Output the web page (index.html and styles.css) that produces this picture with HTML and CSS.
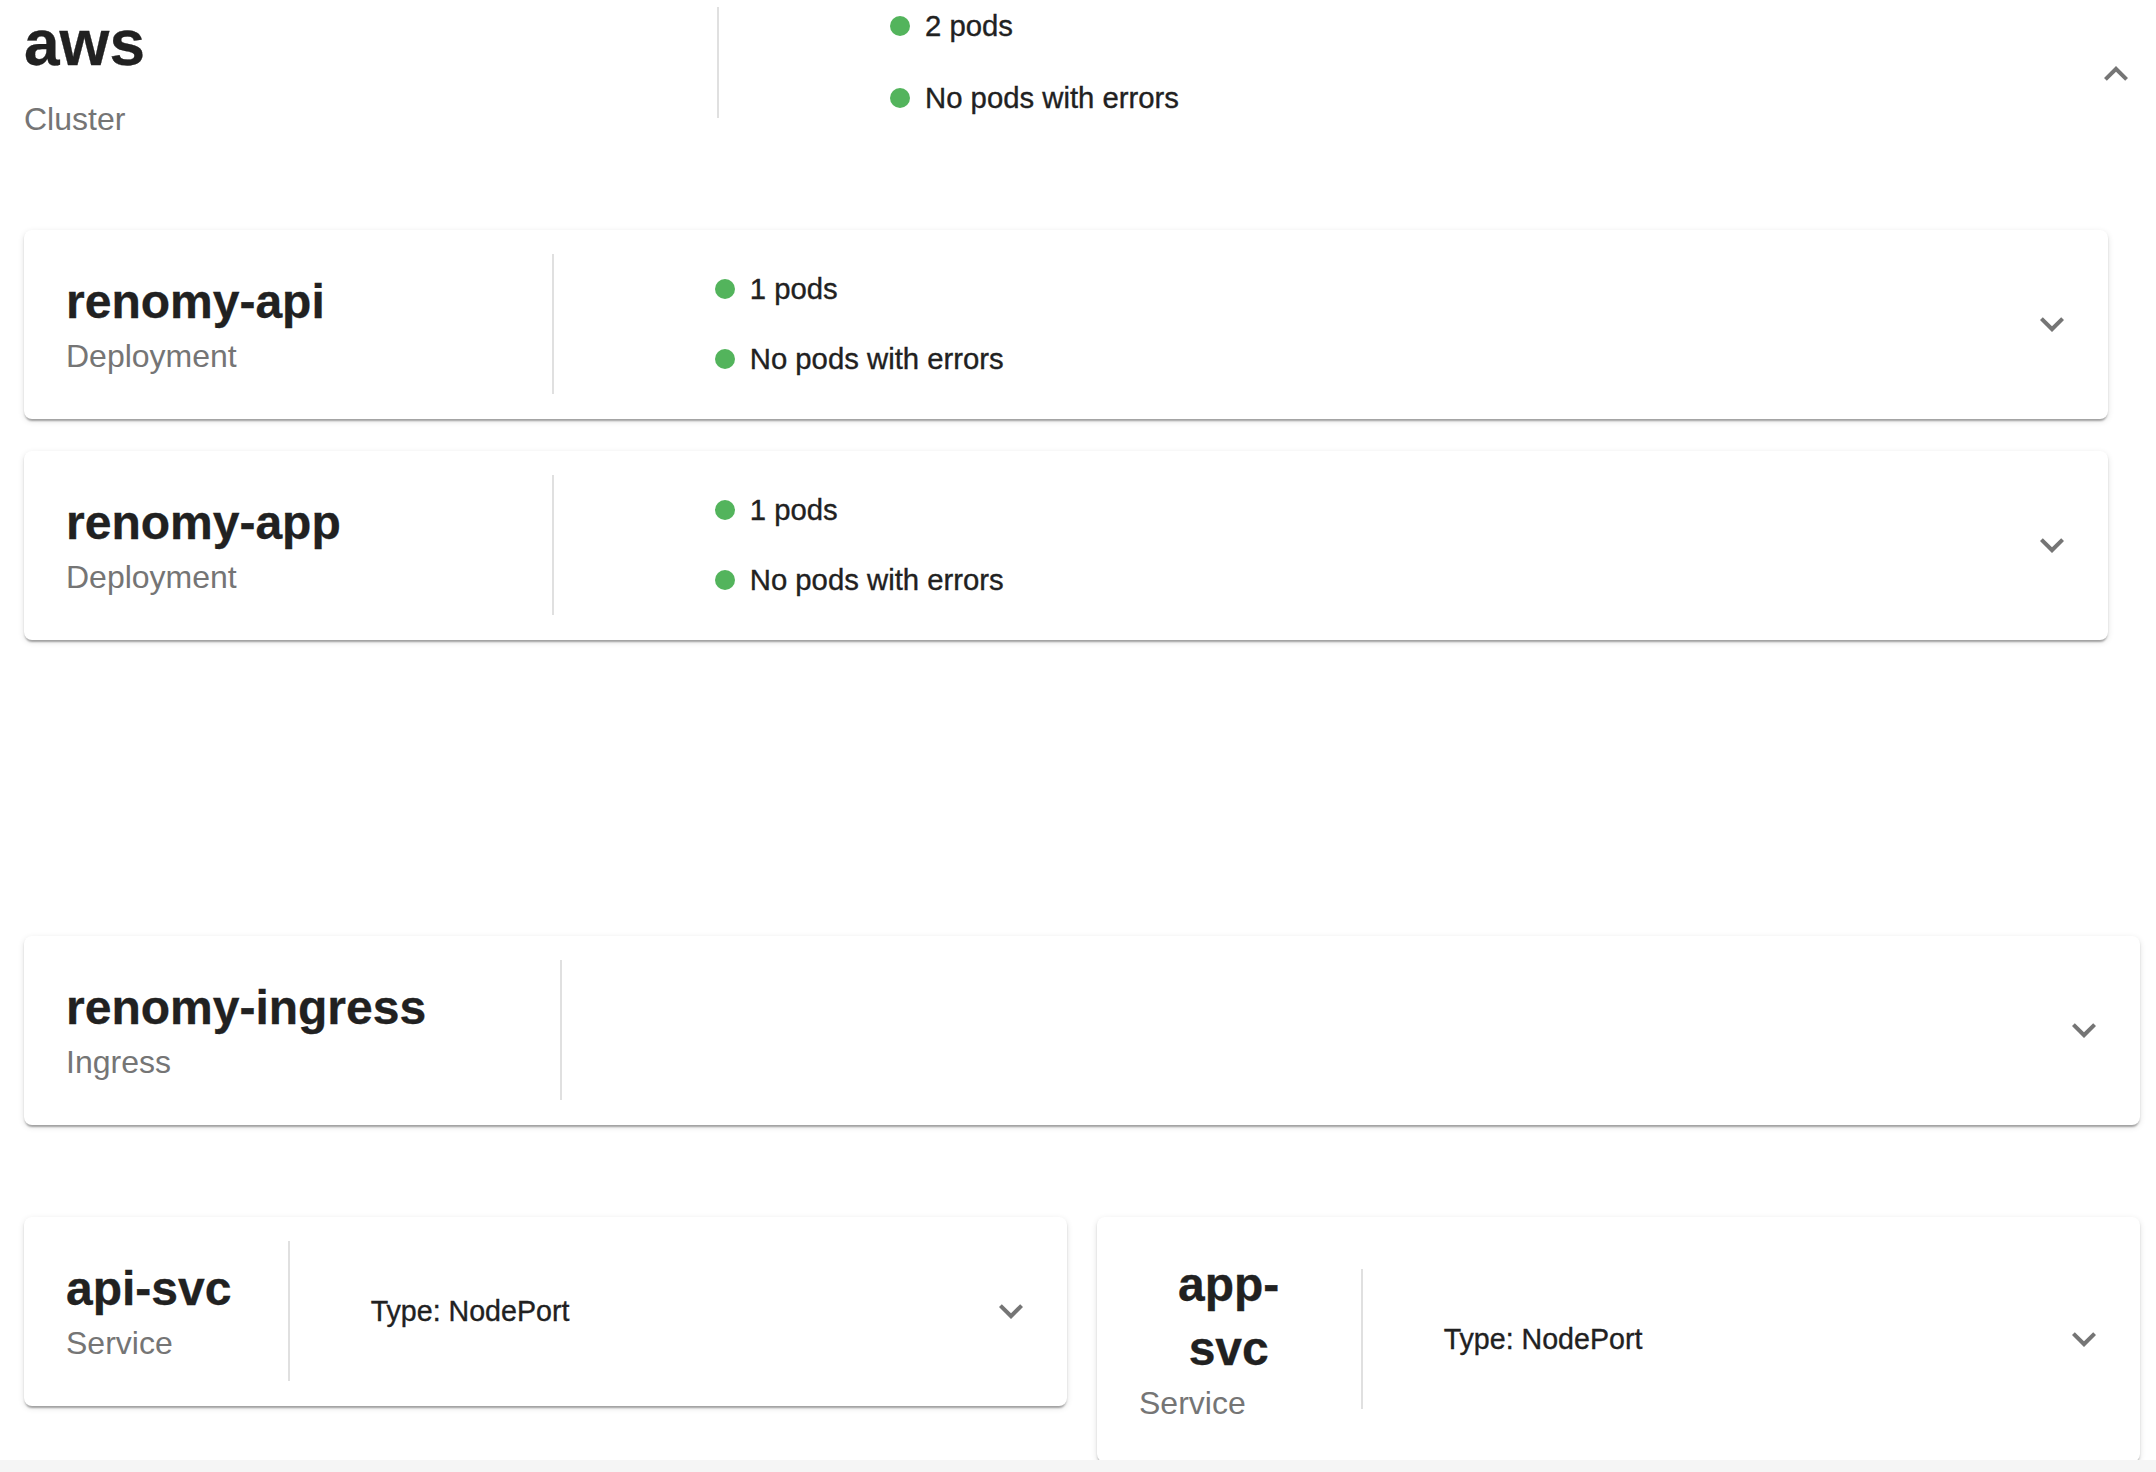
FILE: index.html
```html
<!DOCTYPE html>
<html lang="en">
<head>
<meta charset="utf-8">
<title>Cluster overview</title>
<link rel="stylesheet" href="styles.css">
</head>
<body>
<div class="page">
  <div class="content">
    <section class="cluster">
      <div class="cluster-id">
        <div class="ident">
          <div class="title title-lg">aws</div>
          <div class="kind kind-lg">Cluster</div>
        </div>
      </div>
      <div class="vdiv vdiv-cluster"></div>
      <ul class="status status-cluster">
        <li class="status-row row-lg"><span class="dot"></span>2 pods</li>
        <li class="status-row row-lg"><span class="dot"></span>No pods with errors</li>
      </ul>
      <span class="chev chev-up">
        <svg viewBox="0 0 24 24" width="48" height="48"><path d="M12 8l-6 6 1.41 1.41L12 10.83l4.59 4.58L18 14z"/></svg>
      </span>
    </section>

    <div class="deployments">
      <article class="card">
        <div class="left">
          <div class="ident">
            <div class="title">renomy-api</div>
            <div class="kind">Deployment</div>
          </div>
        </div>
        <div class="vdiv"></div>
        <ul class="right status">
          <li class="status-row"><span class="dot"></span>1 pods</li>
          <li class="status-row"><span class="dot"></span>No pods with errors</li>
        </ul>
        <span class="chev">
          <svg viewBox="0 0 24 24" width="48" height="48"><path d="M16.59 8.59 12 13.17 7.41 8.59 6 10l6 6 6-6z"/></svg>
        </span>
      </article>
      <article class="card">
        <div class="left">
          <div class="ident">
            <div class="title">renomy-app</div>
            <div class="kind">Deployment</div>
          </div>
        </div>
        <div class="vdiv"></div>
        <ul class="right status">
          <li class="status-row"><span class="dot"></span>1 pods</li>
          <li class="status-row"><span class="dot"></span>No pods with errors</li>
        </ul>
        <span class="chev">
          <svg viewBox="0 0 24 24" width="48" height="48"><path d="M16.59 8.59 12 13.17 7.41 8.59 6 10l6 6 6-6z"/></svg>
        </span>
      </article>
    </div>

    <div class="ingresses">
      <article class="card">
        <div class="left">
          <div class="ident">
            <div class="title">renomy-ingress</div>
            <div class="kind">Ingress</div>
          </div>
        </div>
        <div class="vdiv"></div>
        <div class="right"></div>
        <span class="chev">
          <svg viewBox="0 0 24 24" width="48" height="48"><path d="M16.59 8.59 12 13.17 7.41 8.59 6 10l6 6 6-6z"/></svg>
        </span>
      </article>
    </div>

    <div class="services">
      <article class="card">
        <div class="left">
          <div class="ident">
            <div class="title">api-svc</div>
            <div class="kind">Service</div>
          </div>
        </div>
        <div class="vdiv"></div>
        <div class="right type">Type: NodePort</div>
        <span class="chev">
          <svg viewBox="0 0 24 24" width="48" height="48"><path d="M16.59 8.59 12 13.17 7.41 8.59 6 10l6 6 6-6z"/></svg>
        </span>
      </article>
      <article class="card">
        <div class="left">
          <div class="ident">
            <div class="title">app-svc</div>
            <div class="kind">Service</div>
          </div>
        </div>
        <div class="vdiv"></div>
        <div class="right type">Type: NodePort</div>
        <span class="chev">
          <svg viewBox="0 0 24 24" width="48" height="48"><path d="M16.59 8.59 12 13.17 7.41 8.59 6 10l6 6 6-6z"/></svg>
        </span>
      </article>
    </div>
  </div>
</div>
</body>
</html>
```
FILE: styles.css
```css
html, body {
  margin: 0;
  padding: 0;
}
body {
  background: #f5f5f5;
  height: 1472px;
  overflow: hidden;
  font-family: "Liberation Sans", Arial, Helvetica, sans-serif;
  color: #212121;
}
.page {
  background: #ffffff;
  height: 1460px;
  overflow: hidden;
}
.content {
  padding: 0 16px 0 24px;
}

/* cluster header */
.cluster {
  display: flex;
  align-items: center;
  height: 144px;
  margin-top: -10px;
}
.cluster-id {
  flex: 0 0 693px;
  align-self: flex-start;
  padding-top: 15px;
}
.ident {
  display: inline-block;
  max-width: 100%;
}
.title {
  font-size: 48px;
  font-weight: 700;
  line-height: 64px;
  text-align: center;
  color: #212121;
  -webkit-text-stroke: 0.3px #212121;
}
.title-lg {
  font-size: 64px;
  line-height: 77px;
  text-align: left;
}
.kind {
  font-size: 32px;
  line-height: 44px;
  color: #757575;
}
.kind-lg {
  line-height: 48px;
  margin-top: 13px;
}
.vdiv {
  flex: 0 0 2px;
  width: 2px;
  height: 140px;
  background: #e0e0e0;
}
.vdiv-cluster {
  height: 111px;
}
.status {
  list-style: none;
  margin: 0;
}
.status-cluster {
  flex: 1 1 auto;
  padding: 0 0 0 171px;
}
.status-row {
  display: flex;
  align-items: center;
  height: 70px;
  font-size: 29.3px;
  line-height: 70px;
  color: #212121;
  white-space: nowrap;
  -webkit-text-stroke: 0.35px #212121;
}
.row-lg {
  height: 72px;
  line-height: 72px;
}
.dot {
  flex: 0 0 20px;
  width: 20px;
  height: 20px;
  border-radius: 50%;
  background: #53b45c;
  margin-right: 15px;
}
.chev {
  flex: 0 0 48px;
  width: 48px;
  height: 48px;
  display: block;
  fill: #757575;
  margin-right: 32px;
}
.chev svg {
  display: block;
}
.chev-up {
  align-self: flex-start;
  margin-top: 60px;
  margin-right: 0;
}

/* cards */
.card {
  display: flex;
  align-items: center;
  box-sizing: border-box;
  padding: 24px 0 25px;
  background: #ffffff;
  border-radius: 8px;
  box-shadow: 0 4px 2px -2px rgba(0, 0, 0, 0.2),
              0 2px 2px 0 rgba(0, 0, 0, 0.14),
              0 2px 6px 0 rgba(0, 0, 0, 0.12);
}
.left {
  flex: 0 0 25.35%;
  box-sizing: border-box;
  padding: 12px 43px 12px 42px;
}
.right {
  flex: 1 1 auto;
  box-sizing: border-box;
  padding: 0 0 0 7.7%;
  min-width: 0;
}
.type {
  font-size: 28.6px;
  line-height: 40px;
  color: #212121;
  -webkit-text-stroke: 0.35px #212121;
}

.deployments {
  display: flex;
  flex-direction: column;
  gap: 32px;
  margin: 96px 32px 0 0;
}
.ingresses {
  margin-top: 296px;
}
.services {
  display: grid;
  grid-template-columns: 1fr 1fr;
  column-gap: 30px;
  align-items: start;
  margin-top: 92px;
}
```
